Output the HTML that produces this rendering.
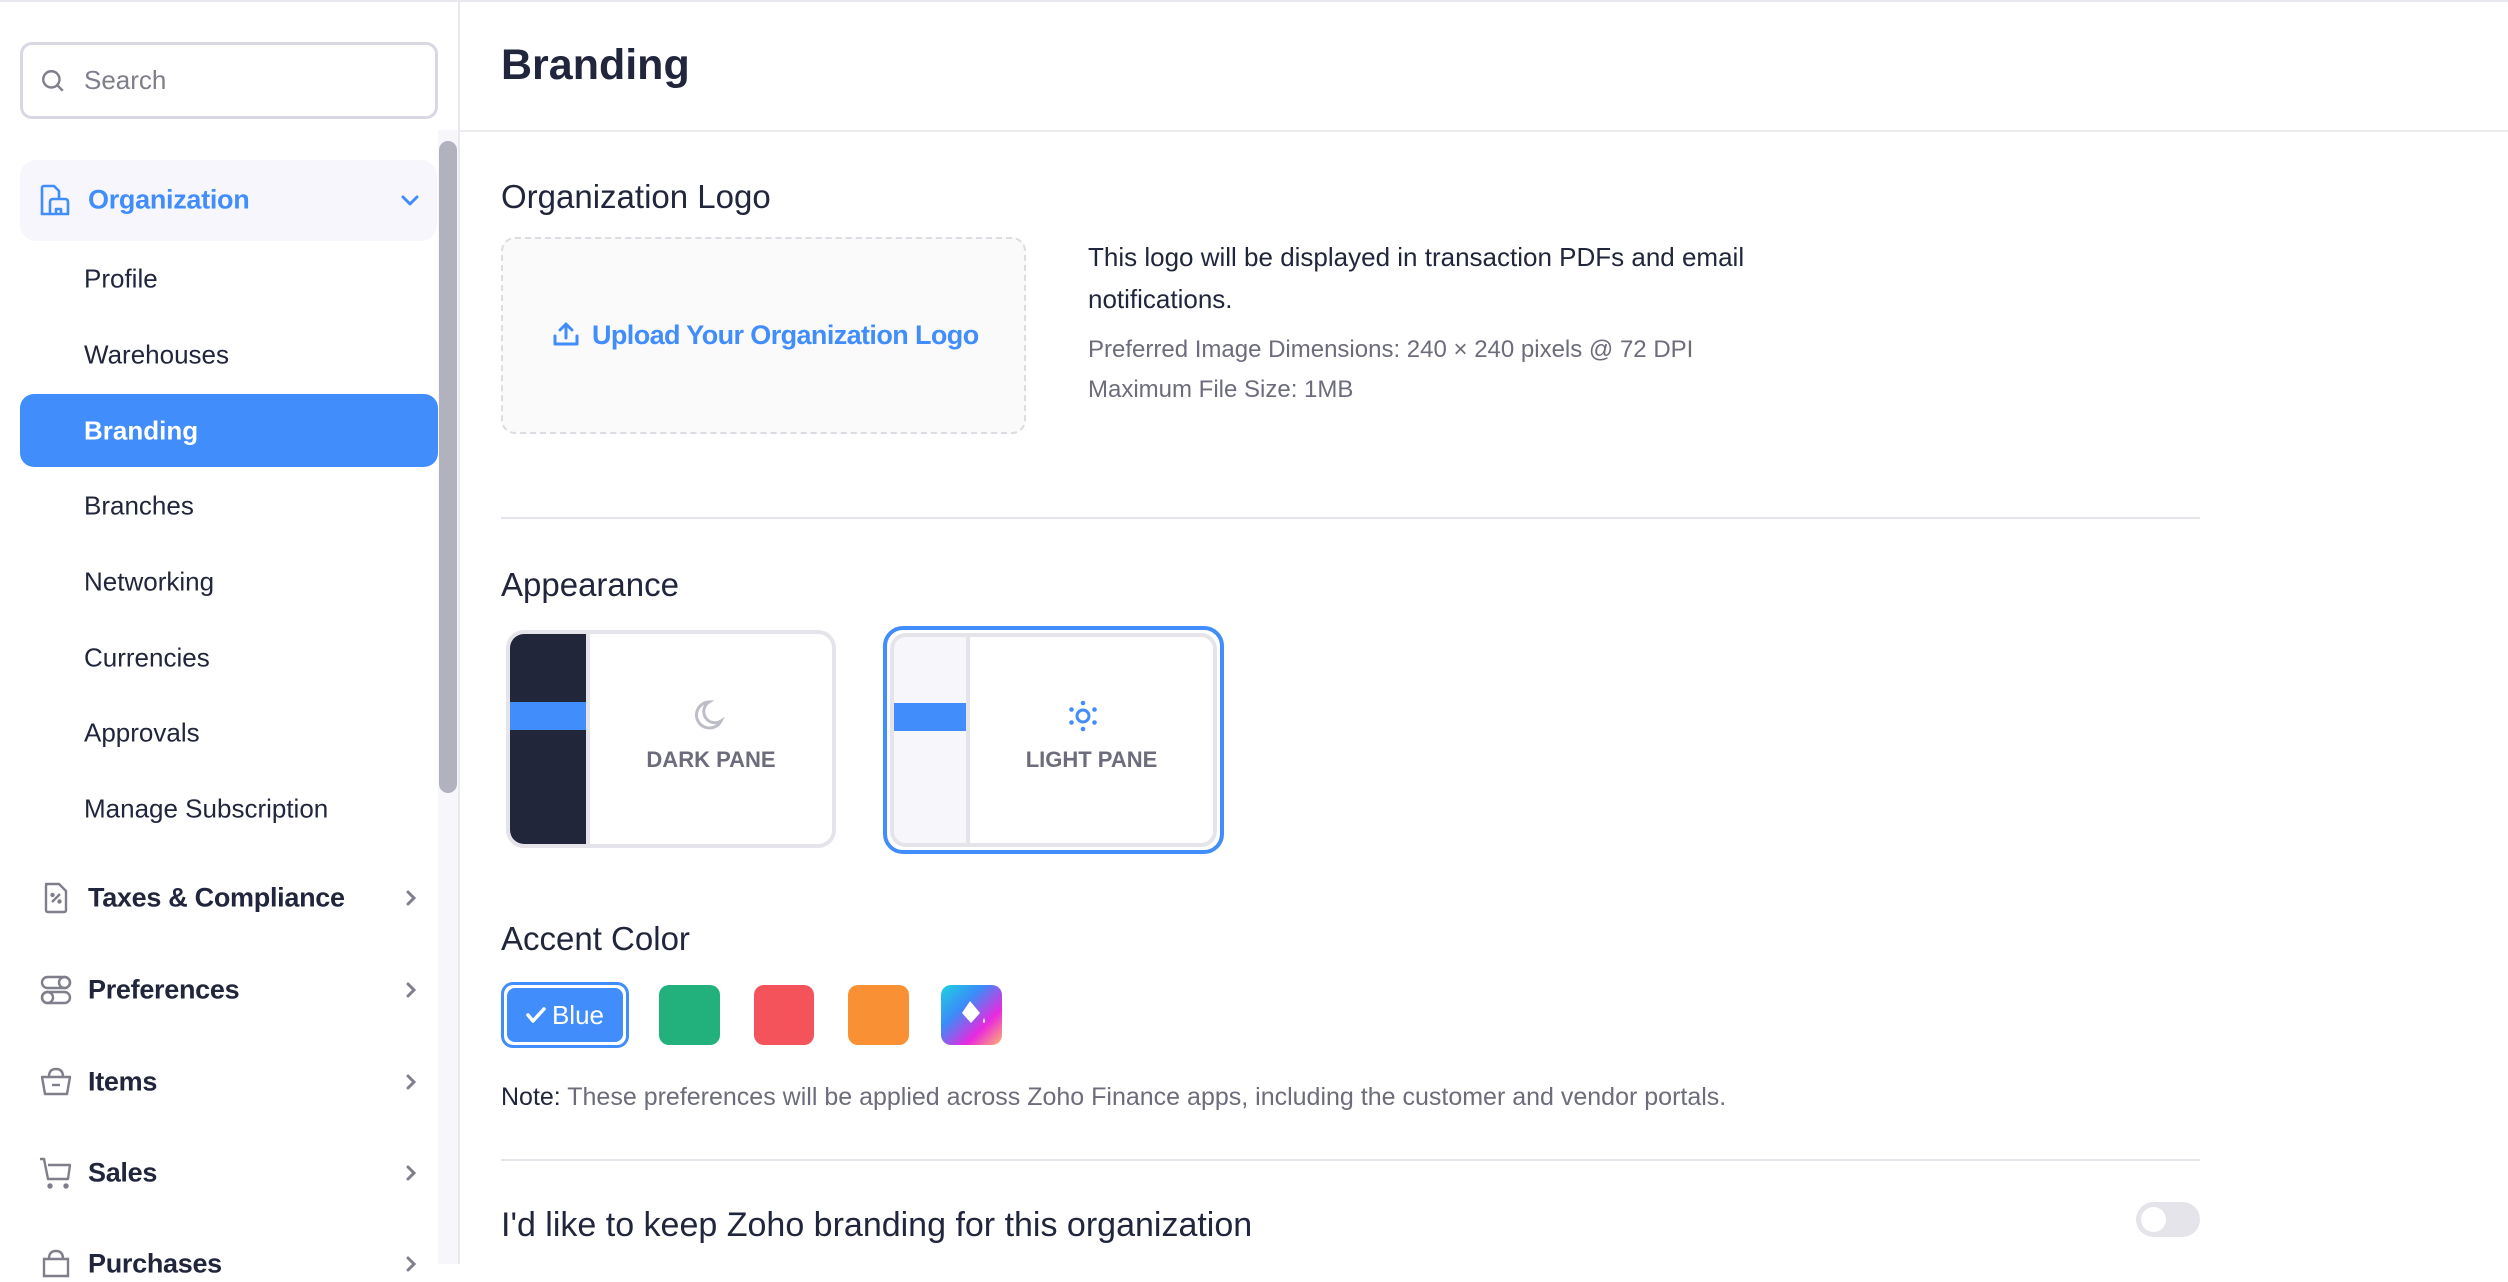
<!DOCTYPE html>
<html><head><meta charset="utf-8"><style>
*{box-sizing:border-box;margin:0;padding:0}
body{width:2508px;height:1264px;overflow:hidden;background:#fff;font-family:"Liberation Sans",sans-serif;color:#21263c;position:relative}
.a{position:absolute;white-space:nowrap}
.nav{position:absolute;left:84px;font-size:26px;color:#21263c;transform:translateY(-50%)}
.grp{position:absolute;left:88px;font-size:27px;color:#21263c;transform:translateY(-50%);font-weight:bold;letter-spacing:-0.3px}
.ic{position:absolute;left:38px;width:36px;height:36px;transform:translateY(-50%)}
.chev{position:absolute;left:402px;width:18px;height:18px;transform:translateY(-50%)}
</style></head><body>
<div class="a" style="left:0;top:0;width:2508px;height:2px;background:#e8e8ee"></div>
<div class="a" style="left:458px;top:0;width:2px;height:1264px;background:#e8e8ee"></div>
<div class="a" style="left:438px;top:130px;width:20px;height:1134px;background:#f7f7fb"></div>
<div class="a" style="left:439px;top:141px;width:18px;height:652px;background:#b2b1be;border-radius:9px"></div>
<div class="a" style="left:20px;top:42px;width:418px;height:77px;border:3px solid #d8d8e2;border-radius:12px"></div>
<svg class="a" style="left:40px;top:68px" width="26" height="26" viewBox="0 0 24 24" fill="none" stroke="#7f7f8c" stroke-width="2.2"><circle cx="10.5" cy="10.5" r="7.5"/><path d="M16 16l5 5"/></svg>
<div class="a" style="left:84px;top:65px;font-size:26px;color:#7f7f8c">Search</div>
<div class="a" style="left:20px;top:160px;width:417px;height:81px;background:#f6f6fc;border-radius:16px"></div>
<svg class="a" style="left:40px;top:183px" width="32" height="34" viewBox="0 0 32 34" fill="none" stroke="#408dfb" stroke-width="2.6" stroke-linejoin="round"><path d="M4 3h10l5 5v8"/><path d="M4 3q-2 0-2 2v26h8"/><path d="M10 31V19q0-3 3-3h12q3 0 3 3v12H10z"/><path d="M16 31v-5h5v5"/></svg>
<div class="grp" style="top:200px;color:#408dfb">Organization</div>
<svg class="a" style="left:400px;top:192px" width="20" height="16" viewBox="0 0 20 16" fill="none" stroke="#408dfb" stroke-width="3" stroke-linecap="round" stroke-linejoin="round"><path d="M3 5l7 7 7-7"/></svg>
<div class="nav" style="top:279px">Profile</div>
<div class="nav" style="top:355px">Warehouses</div>
<div class="a" style="left:20px;top:394px;width:418px;height:73px;background:#408dfb;border-radius:14px"></div>
<div class="nav" style="top:431px;color:#fff;font-weight:bold">Branding</div>
<div class="nav" style="top:506px">Branches</div>
<div class="nav" style="top:582px">Networking</div>
<div class="nav" style="top:658px">Currencies</div>
<div class="nav" style="top:733px">Approvals</div>
<div class="nav" style="top:809px">Manage Subscription</div>

<svg class="ic" style="top:898px" viewBox="0 0 36 36" fill="none" stroke="#7f7f8c" stroke-width="2.4" stroke-linejoin="round"><path d="M8 4h13l7 7v19q0 2-2 2H10q-2 0-2-2V6q0-2 2-2z"/><path d="M14 22l8-8"/><circle cx="14.5" cy="15" r="1" fill="#7f7f8c"/><circle cx="21.5" cy="21.5" r="1" fill="#7f7f8c"/></svg>
<div class="grp" style="top:898px">Taxes &amp; Compliance</div>
<svg class="chev" style="top:898px" viewBox="0 0 18 18" fill="none" stroke="#7f7f8c" stroke-width="3" stroke-linecap="round"><path d="M6 3l6 6-6 6"/></svg>

<svg class="ic" style="top:990px" viewBox="0 0 36 36" fill="none" stroke="#7f7f8c" stroke-width="2.4"><rect x="4" y="5" width="28" height="11" rx="5.5"/><rect x="4" y="20" width="28" height="11" rx="5.5"/><circle cx="26.5" cy="10.5" r="5.5"/><circle cx="9.5" cy="25.5" r="5.5"/></svg>
<div class="grp" style="top:990px">Preferences</div>
<svg class="chev" style="top:990px" viewBox="0 0 18 18" fill="none" stroke="#7f7f8c" stroke-width="3" stroke-linecap="round"><path d="M6 3l6 6-6 6"/></svg>

<svg class="ic" style="top:1082px" viewBox="0 0 36 36" fill="none" stroke="#7f7f8c" stroke-width="2.4" stroke-linejoin="round"><path d="M4 13h28l-3 17H7z"/><path d="M11 13q0-8 7-8t7 8"/><path d="M14 21h8"/></svg>
<div class="grp" style="top:1082px">Items</div>
<svg class="chev" style="top:1082px" viewBox="0 0 18 18" fill="none" stroke="#7f7f8c" stroke-width="3" stroke-linecap="round"><path d="M6 3l6 6-6 6"/></svg>

<svg class="ic" style="top:1173px" viewBox="0 0 36 36" fill="none" stroke="#7f7f8c" stroke-width="2.4" stroke-linejoin="round"><path d="M2 4h4l4 20h20l2-14H10"/><circle cx="12" cy="31" r="1.5" fill="#7f7f8c"/><circle cx="28" cy="31" r="1.5" fill="#7f7f8c"/></svg>
<div class="grp" style="top:1173px">Sales</div>
<svg class="chev" style="top:1173px" viewBox="0 0 18 18" fill="none" stroke="#7f7f8c" stroke-width="3" stroke-linecap="round"><path d="M6 3l6 6-6 6"/></svg>

<svg class="ic" style="top:1264px" viewBox="0 0 36 36" fill="none" stroke="#7f7f8c" stroke-width="2.4"><path d="M6 13h24v17H6z"/><path d="M11 13q0-8 7-8t7 8"/></svg>
<div class="grp" style="top:1264px">Purchases</div>
<svg class="chev" style="top:1264px" viewBox="0 0 18 18" fill="none" stroke="#7f7f8c" stroke-width="3" stroke-linecap="round"><path d="M6 3l6 6-6 6"/></svg>

<div class="a" style="left:501px;top:41px;font-size:43px;color:#21263c;font-weight:bold">Branding</div>
<div class="a" style="left:460px;top:130px;width:2048px;height:2px;background:#ececf0"></div>

<div class="a" style="left:501px;top:178px;font-size:33px;color:#21263c">Organization Logo</div>
<div class="a" style="left:501px;top:237px;width:525px;height:197px;border:2px dashed #dcdce2;border-radius:14px;background:#fafafa"></div>
<svg class="a" style="left:552px;top:320px" width="28" height="28" viewBox="0 0 28 28" fill="none" stroke="#408dfb" stroke-width="3" stroke-linecap="round" stroke-linejoin="round"><path d="M14 18V4M8 10l6-6 6 6"/><path d="M3 16v8h22v-8"/></svg>
<div class="a" style="left:592px;top:320px;font-size:27px;color:#408dfb;font-weight:bold;letter-spacing:-0.6px">Upload Your Organization Logo</div>
<div class="a" style="left:1088px;top:236px;font-size:26px;color:#21263c;line-height:42px">This logo will be displayed in transaction PDFs and email<br>notifications.</div>
<div class="a" style="left:1088px;top:330px;font-size:24px;color:#6c6c7c;line-height:40px">Preferred Image Dimensions: 240 × 240 pixels @ 72 DPI<br>Maximum File Size: 1MB</div>
<div class="a" style="left:501px;top:517px;width:1699px;height:2px;background:#e4e4ea"></div>

<div class="a" style="left:501px;top:566px;font-size:33px;color:#21263c">Appearance</div>
<div class="a" style="left:506px;top:630px;width:330px;height:218px;border:4px solid #e4e4ea;border-radius:18px;overflow:hidden;background:#fff">
 <div style="position:absolute;left:0;top:0;width:76px;height:100%;background:#22263a"></div>
 <div style="position:absolute;left:76px;top:0;width:4px;height:100%;background:#e4e4ea"></div>
 <div style="position:absolute;left:0;top:68px;width:76px;height:28px;background:#408dfb"></div>
 <svg style="position:absolute;left:179px;top:64px" width="36" height="36" viewBox="0 0 36 36" fill="none" stroke="#bdbdc8" stroke-width="3"><path d="M20 4a13 13 0 1 0 12 19A11 11 0 0 1 20 4z"/></svg>
 <div style="position:absolute;left:80px;width:242px;top:113px;text-align:center;font-size:22px;font-weight:bold;color:#6c6c7c">DARK PANE</div>
</div>
<div class="a" style="left:883px;top:626px;width:341px;height:228px;border:4px solid #408dfb;border-radius:20px;padding:3px">
 <div style="position:relative;width:100%;height:100%;border:4px solid #e4e4ea;border-radius:16px;overflow:hidden;background:#fff">
  <div style="position:absolute;left:0;top:0;width:72px;height:100%;background:#f6f6fb"></div>
  <div style="position:absolute;left:72px;top:0;width:4px;height:100%;background:#e4e4ea"></div>
  <div style="position:absolute;left:0;top:66px;width:72px;height:28px;background:#408dfb"></div>
  <svg style="position:absolute;left:172px;top:62px" width="34" height="34" viewBox="0 0 34 34" fill="#408dfb"><circle cx="17" cy="17" r="6" fill="none" stroke="#408dfb" stroke-width="3"/><circle cx="17" cy="4" r="2.3"/><circle cx="17" cy="30" r="2.3"/><circle cx="5.5" cy="10.5" r="2.3"/><circle cx="28.5" cy="10.5" r="2.3"/><circle cx="5.5" cy="23.5" r="2.3"/><circle cx="28.5" cy="23.5" r="2.3"/></svg>
  <div style="position:absolute;left:76px;right:0;top:110px;text-align:center;font-size:22px;font-weight:bold;color:#6c6c7c">LIGHT PANE</div>
 </div>
</div>

<div class="a" style="left:501px;top:920px;font-size:33px;color:#21263c">Accent Color</div>
<div class="a" style="left:501px;top:982px;width:128px;height:66px;border:3px solid #408dfb;border-radius:12px;padding:3px"><div style="width:100%;height:100%;background:#408dfb;border-radius:8px;color:#fff;font-size:26px;display:flex;align-items:center;justify-content:center;gap:6px"><svg width="20" height="18" viewBox="0 0 20 18" fill="none" stroke="#fff" stroke-width="3.5" stroke-linecap="round" stroke-linejoin="round"><path d="M2 9l5 6L18 3"/></svg>Blue</div></div>
<div class="a" style="left:659px;top:985px;width:61px;height:60px;background:#22b07d;border-radius:10px"></div>
<div class="a" style="left:754px;top:985px;width:60px;height:60px;background:#f5535c;border-radius:10px"></div>
<div class="a" style="left:848px;top:985px;width:61px;height:60px;background:#fa9034;border-radius:10px"></div>
<div class="a" style="left:941px;top:985px;width:61px;height:60px;border-radius:10px;background:linear-gradient(135deg,#1fd1e0 0%,#3a8cf8 35%,#e92adf 70%,#ffb56b 100%)"></div>
<svg class="a" style="left:954px;top:996px" width="36" height="36" viewBox="0 0 36 36" fill="#fff"><path d="M16 5l10 12-9 10-9-10z"/><path d="M30 22q2 4 0 5q-2-1 0-5z"/></svg>

<div class="a" style="left:501px;top:1083px;font-size:25px;color:#6c6c7c"><span style="color:#21263c">Note:</span> These preferences will be applied across Zoho Finance apps, including the customer and vendor portals.</div>
<div class="a" style="left:501px;top:1159px;width:1699px;height:2px;background:#e4e4ea"></div>

<div class="a" style="left:501px;top:1206px;font-size:34px;color:#21263c">I'd like to keep Zoho branding for this organization</div>
<div class="a" style="left:2136px;top:1202px;width:64px;height:35px;background:#e4e4ea;border-radius:18px"><div style="position:absolute;left:5px;top:5px;width:25px;height:25px;border-radius:50%;background:#fff"></div></div>
</body></html>
